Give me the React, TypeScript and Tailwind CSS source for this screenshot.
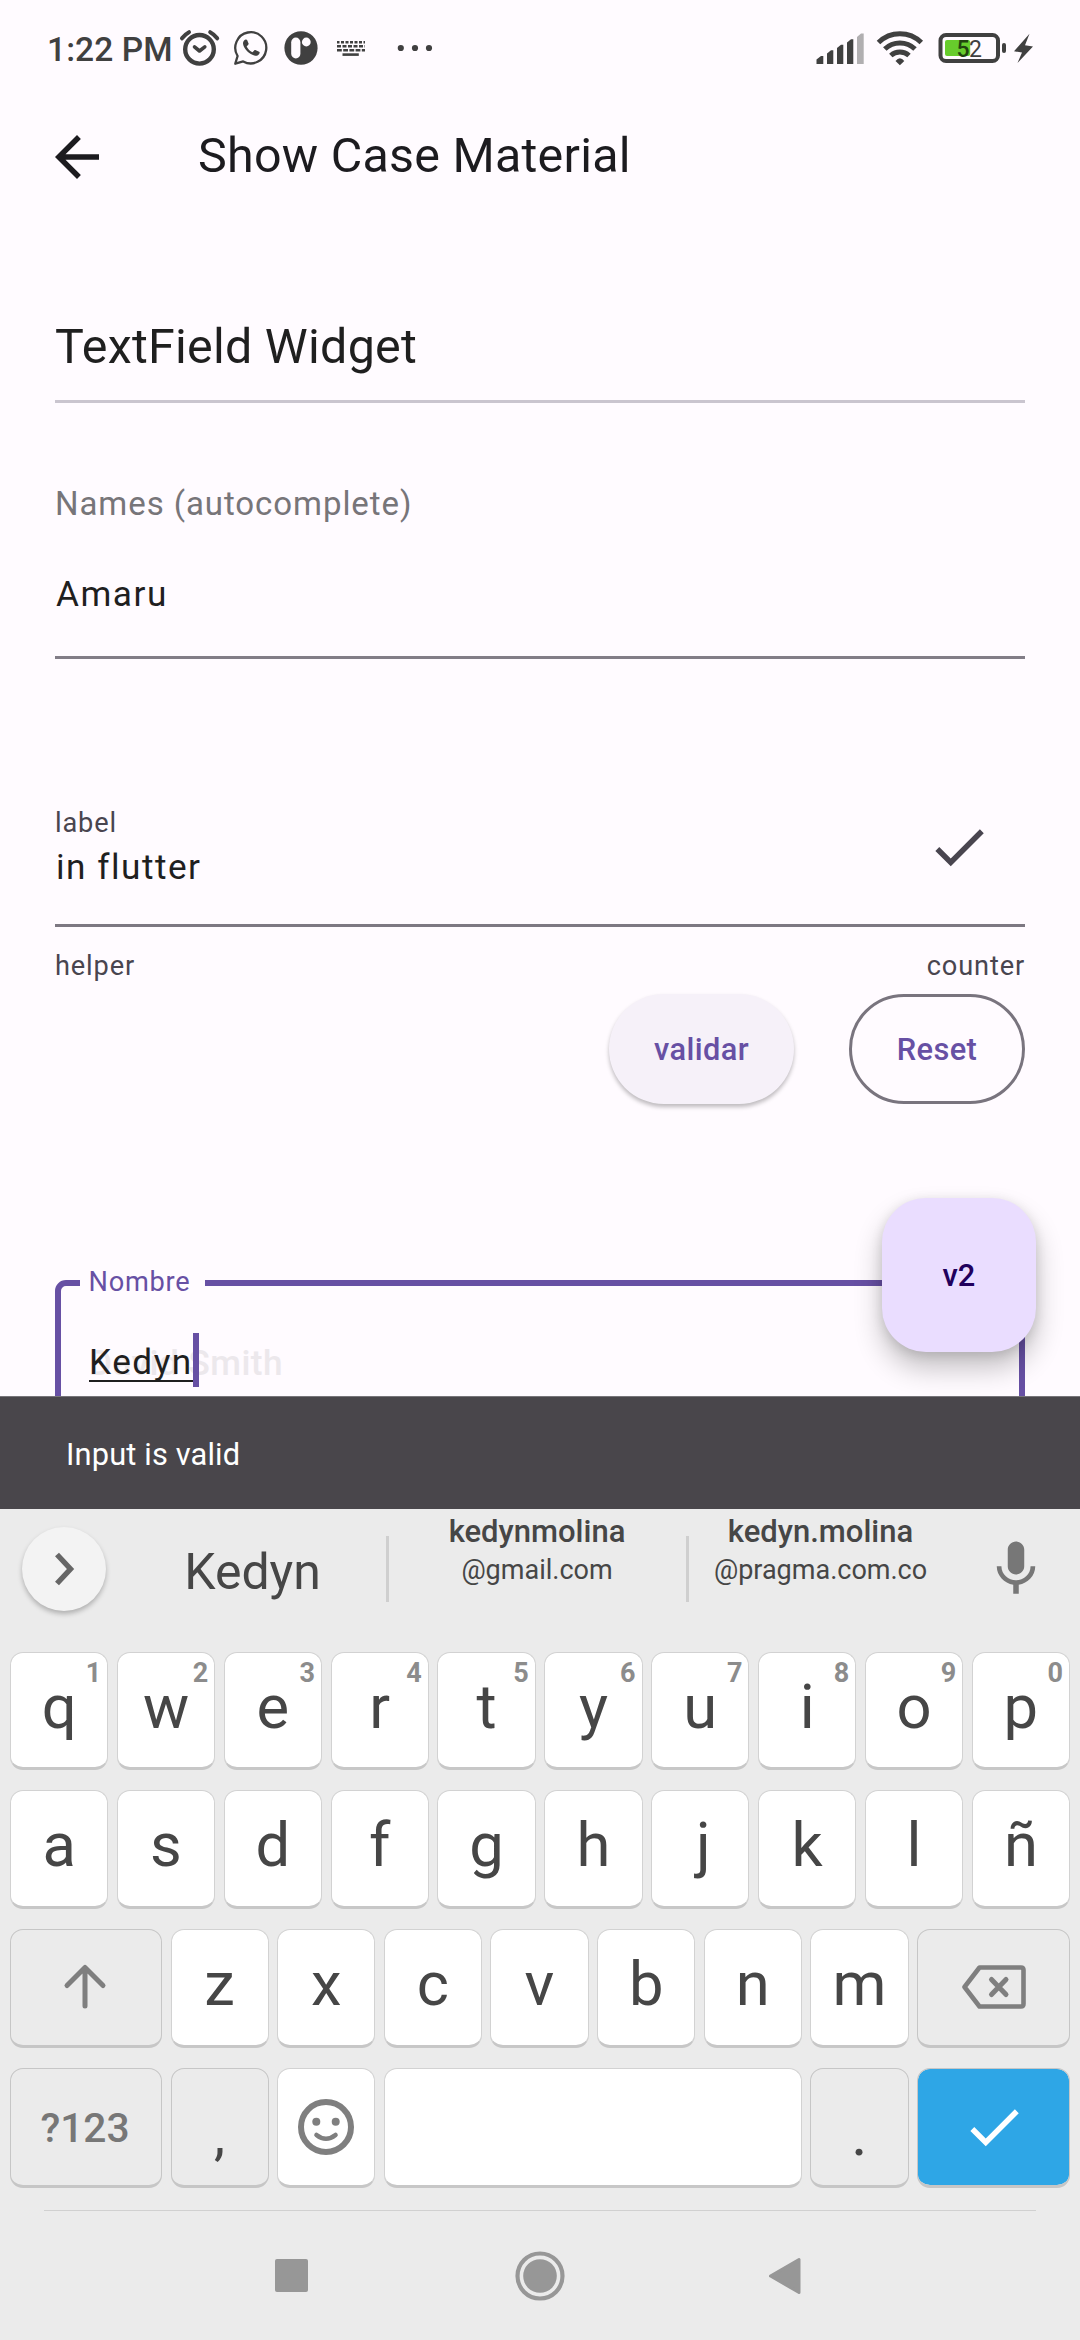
import type { ReactNode } from "react";
import { MdArrowBack, MdCheck, MdMic } from "react-icons/md";

function StatusIcons() {
  return (
    <svg width="260" height="44" viewBox="176 28 260 44" fill="none" className="ml-[5px]">
      {/* alarm */}
      <g stroke="#404040" strokeLinecap="round" strokeLinejoin="round">
        <circle cx="199.5" cy="50.3" r="14.3" strokeWidth="4.4" />
        <path d="M182 39.3 Q185 35.3 189 33.2 M217.2 39.3 Q214.2 35.3 210.2 33.2" strokeWidth="4" />
        <path d="M194.5 47.8 L199.5 52 L204.8 47.8" strokeWidth="3.6" />
      </g>
      {/* messenger */}
      <path
        d="M235.3 64.7 L237.6 57 A15.5 15.6 0 1 1 243.2 62.4 Z"
        stroke="#404040"
        strokeWidth="2.3"
        strokeLinejoin="round"
      />
      <g transform="translate(240.3 37.4) scale(0.92)" fill="#404040">
        <path d="M6.9 10.9c1.4 2.8 3.6 4.9 6.3 6.3l1.9-2c.4-.4.8-.5 1.3-.3l4 1.8c.6.3.8.7.6 1.3-.7 2.2-2.7 3.4-4.9 3C9.6 19.6 4 13.6 3 8.2c-.3-2.2 1-4.4 2.8-4.9.7-.1 1.3 0 1.6.6l1.6 3.7c.2.5.1.8-.2 1.2z" />
      </g>
      {/* round app badge */}
      <ellipse cx="301" cy="49" rx="16.6" ry="16.8" fill="#404040" />
      <rect x="291.2" y="38.6" width="9.2" height="20.8" rx="4.6" fill="#fffbff" />
      <circle cx="306.3" cy="43" r="4.4" fill="#fffbff" />
      {/* keyboard */}
      <g stroke="#404040" strokeWidth="2.6">
        <path d="M337 43.3 H365" strokeDasharray="3 1.5" strokeDashoffset="0.5" />
        <path d="M337 47.3 H365" strokeDasharray="4 1.5" />
        <path d="M337 51.3 H365" strokeDasharray="4.8 1.4" />
        <path d="M342.5 55.6 H358.8" />
      </g>
      {/* overflow dots */}
      <g fill="#404040">
        <circle cx="400.8" cy="49" r="3.1" />
        <circle cx="415" cy="49" r="3.1" />
        <circle cx="429" cy="49" r="3.1" />
      </g>
    </svg>
  );
}

function SystemIcons() {
  return (
    <svg width="222" height="44" viewBox="814 28 222 44" fill="none">
      {/* signal */}
      <g fill="#404040">
        <path d="M816.5 65 V60.5 L821 57 H823.3 V65 Z" />
        <path d="M827 65 V54.5 L831 51.2 H833.3 V65 Z" />
        <path d="M837 65 V49 L841 45.8 H843.3 V65 Z" />
        <path d="M847 65 V43.5 L851 40.2 H853.3 V65 Z" />
      </g>
      <path d="M857 65 V38 L861 34.5 H863.7 V65 Z" fill="#b1afb1" />
      {/* wifi */}
      <g stroke="#404040" strokeWidth="5">
        <path d="M878.5 43.5 A30.5 30.5 0 0 1 921.3 43.5" />
        <path d="M884.8 50 A21.7 21.7 0 0 1 915 50" />
        <path d="M890.8 56.5 A13.5 13.5 0 0 1 909 56.5" />
      </g>
      <path d="M895.5 62 Q899.9 56.5 904.3 62 L899.9 66.3 Z" fill="#404040" />
      {/* battery */}
      <rect x="940.5" y="36" width="57.5" height="26" rx="5.5" stroke="#404040" strokeWidth="4" />
      <rect x="945" y="41" width="25.2" height="16" rx="2" fill="#67cc2c" />
      <rect x="1002" y="44" width="4" height="10" rx="2" fill="#404040" />
      <text x="956.6" y="58" fontFamily="Roboto" fontSize="23" fontWeight="500" fill="#22420f">
        5
      </text>
      <text x="969" y="58" fontFamily="Roboto" fontSize="23" fill="#404040">
        2
      </text>
      <path d="M1029.5 34.8 L1014 52.3 L1022 53.5 L1017.5 64 L1033 47.5 L1025 46.3 Z" fill="#404040" />
    </svg>
  );
}

type KeyProps = {
  children?: ReactNode;
  hint?: string;
  tone?: "light" | "flat" | "accent";
  className?: string;
};

const tones = {
  light: "border-[#d2d2d2] border-b-[#c7c7c7] bg-white",
  flat: "border-[#c6c6c6] bg-[#ebebeb]",
  accent: "border-[#c6c6c6] bg-[#2ea6e6] bg-clip-padding",
};

function Key({ children, hint, tone = "light", className = "" }: KeyProps) {
  return (
    <div
      className={`relative flex h-full justify-center rounded-[13px] border border-b-[3px] text-[61.5px] leading-[109px] text-[#464646] ${tones[tone]} ${className}`}
    >
      {hint && (
        <span className="absolute top-0 right-[6px] text-[27px] leading-[40px] font-bold text-[#8c8c8c]">{hint}</span>
      )}
      {children}
    </div>
  );
}

function Keyboard() {
  return (
    <section className="flex h-[831px] flex-col bg-[#ebebeb] text-[#464646]">
      <div className="flex h-[143px] shrink-0 items-start">
        <div className="flex w-[386px] items-start pl-[22px]">
          <div className="mt-[18px] flex size-[84px] items-center justify-center rounded-full bg-[#f3f3f3] shadow-[0_3px_5px_rgba(0,0,0,0.25)]">
            <svg width="24" height="36" viewBox="0 0 24 36" fill="none" className="ml-[2px]">
              <path d="M4 3.5 L17.5 18 L4 32.5" stroke="#666" strokeWidth="5.4" />
            </svg>
          </div>
          <div className="mt-[33px] ml-[13px] flex-1 text-center text-[50px] leading-[60px]">Kedyn</div>
        </div>
        <div className="mt-[27px] h-[66px] w-[3px] bg-[#cfcfcf]" />
        <div className="mt-[5px] w-[297px] pr-px text-center">
          <div className="text-[31px] leading-[36px] font-medium">kedynmolina</div>
          <div className="mt-[2px] text-[27px] leading-[36px]">@gmail.com</div>
        </div>
        <div className="mt-[27px] h-[66px] w-[3px] bg-[#cfcfcf]" />
        <div className="mt-[5px] w-[263px] text-center">
          <div className="text-[31px] leading-[36px] font-medium">kedyn.molina</div>
          <div className="mt-[2px] text-[27px] leading-[36px]">@pragma.com.co</div>
        </div>
        <MdMic className="mt-[27px] ml-[31px] size-[66px] text-[#777]" />
      </div>

      <div className="flex flex-col gap-5 px-[10px]">
        <div className="grid h-[118px] grid-cols-10 gap-[8.6px]">
          {"qwertyuiop".split("").map((c, i) => (
            <Key key={c} hint={String((i + 1) % 10)}>
              {c}
            </Key>
          ))}
        </div>
        <div className="grid h-[119px] grid-cols-10 gap-[8.6px]">
          {"asdfghjklñ".split("").map((c) => (
            <Key key={c} className={c === "j" ? "pl-[6px]" : ""}>
              {c}
            </Key>
          ))}
        </div>
        <div className="flex h-[119px] gap-[8.5px]">
          <Key tone="flat" className="w-[152px] items-center">
            <svg width="46" height="48" viewBox="0 0 46 48" fill="none" className="-mt-[2px] mr-[2px]">
              <path
                d="M23 43 V5 M5 22.5 L23 4.5 L41 22.5"
                stroke="#7f7f7f"
                strokeWidth="5"
                strokeLinecap="round"
                strokeLinejoin="round"
              />
            </svg>
          </Key>
          <div className="grid flex-1 grid-cols-7 gap-[8.6px]">
            {"zxcvbnm".split("").map((c) => (
              <Key key={c}>{c}</Key>
            ))}
          </div>
          <Key tone="flat" className="w-[153px] items-center">
            <svg width="66" height="48" viewBox="0 0 66 48" fill="none" className="-mt-[2px]">
              <g stroke="#7f7f7f" strokeWidth="4.6" strokeLinecap="round" strokeLinejoin="round">
                <path d="M18.5 4.5 H60 Q62.5 4.5 62.5 7 V41 Q62.5 43.5 60 43.5 H18.5 L3.5 24 Z" />
                <path d="M30.5 16.5 L45 31.5 M45 16.5 L30.5 31.5" strokeWidth="5" />
              </g>
            </svg>
          </Key>
        </div>
        <div className="flex h-[120px] gap-[8.5px]">
          <Key tone="flat" className="w-[152px]">
            <span className="mr-[2px] text-[40.7px] leading-[118px] font-medium text-[#777]">?123</span>
          </Key>
          <Key tone="flat" className="w-[98px]">
            <span className="text-[56px] leading-[132px]">,</span>
          </Key>
          <Key className="w-[98px] items-center">
            <svg width="58" height="58" viewBox="0 0 58 58" fill="none">
              <circle cx="29" cy="29" r="25" stroke="#7f7f7f" strokeWidth="6" />
              <circle cx="19.3" cy="23.7" r="4" fill="#7f7f7f" />
              <circle cx="38.7" cy="23.7" r="4" fill="#7f7f7f" />
              <path d="M19.5 37 Q29 44.5 38.5 37" stroke="#7f7f7f" strokeWidth="4.6" strokeLinecap="round" />
            </svg>
          </Key>
          <Key className="flex-1" />
          <Key tone="flat" className="w-[98.5px]">
            <span className="leading-[130px]">.</span>
          </Key>
          <Key tone="accent" className="w-[153px] items-center">
            <MdCheck className="size-[66px] text-white" />
          </Key>
        </div>
      </div>

      <div className="mx-11 mt-[22px] h-px bg-[#d0d0d0]" />
      <nav className="flex h-[129px] items-center pl-[275px]">
        <div className="size-[33px] rounded-[2px] bg-[#979797]" />
        <svg width="50" height="50" viewBox="0 0 50 50" className="ml-[207px]">
          <circle cx="25" cy="25" r="22.5" fill="none" stroke="#979797" strokeWidth="4.2" />
          <circle cx="25" cy="25" r="16.8" fill="#979797" />
        </svg>
        <svg width="34" height="40" viewBox="0 0 34 40" className="ml-[203px]">
          <path
            d="M2.5 20 L31 3.5 V36.5 Z"
            fill="#979797"
            stroke="#979797"
            strokeWidth="3"
            strokeLinejoin="round"
          />
        </svg>
      </nav>
    </section>
  );
}

export default function App() {
  return (
    <div className="flex h-[2340px] w-[1080px] flex-col overflow-hidden bg-[#fffbff] font-['Roboto',sans-serif] text-[#1f1f1f]">
      <main className="relative h-[1396px] shrink-0 overflow-hidden">
        <div className="flex h-[98px] items-center justify-between pr-[44px] pl-[47px]">
          <div className="flex items-center">
            <span className="mt-[3px] w-[124px] text-[33.5px] font-medium tracking-[0.1px] whitespace-nowrap text-[#404040]">
              1:22 PM
            </span>
            <StatusIcons />
          </div>
          <SystemIcons />
        </div>

        <header className="flex h-[118px] items-center pl-11 text-[#1c1b1f]">
          <MdArrowBack className="size-[66px]" />
          <h1 className="mb-[3px] ml-[88px] text-[48.4px] leading-[60px] tracking-[0.26px]">Show Case Material</h1>
        </header>

        <div className="px-[55px]">
          <h2 className="mt-[100px] h-[87px] border-b-[3px] border-[#cac5cf] pt-px text-[48.4px] leading-[60px] tracking-[0.26px]">
            TextField Widget
          </h2>

          <div className="mt-[81px] text-[33px] leading-[40px] tracking-[0.93px] text-[#777579]">Names (autocomplete)</div>
          <div className="mt-12 h-[87px] border-b-[3px] border-[#827d87] pl-px text-[35.2px] leading-[44px] tracking-[1.5px]">
            Amaru
          </div>

          <div className="mt-[148px] flex h-[120px] items-start justify-between border-b-[3px] border-[#7d7882]">
            <div>
              <div className="text-[27.2px] leading-[32px] tracking-[0.85px] text-[#49454f]">label</div>
              <div className="mt-[6px] pl-px text-[35.2px] leading-[44px] tracking-[1.5px]">in flutter</div>
            </div>
            <MdCheck className="mt-[7px] mr-[33px] size-[66px] text-[#49454f]" />
          </div>
          <div className="mt-[23px] flex justify-between text-[27.2px] leading-[32px] tracking-[0.85px] text-[#49454f]">
            <span>helper</span>
            <span>counter</span>
          </div>

          <div className="mt-3 flex justify-end gap-[55px] text-[30.8px] font-medium tracking-[0.4px] text-[#6750a4]">
            <button className="h-[110px] w-[185px] rounded-full bg-[#f6f1f9] pt-[2px] shadow-[0_3px_4px_rgba(0,0,0,0.26)]">
              validar
            </button>
            <button className="h-[110px] w-[176px] rounded-full border-[3px] border-[#79747e] pt-[2px]">Reset</button>
          </div>

          <div className="relative mt-[176px] h-[180px] rounded-[11px] border-[6px] border-[#6750a4] pl-[28px]">
            <span className="absolute -top-[22px] left-[19px] h-8 w-[125px] bg-[#fffbff] pl-[8.5px] text-[27.2px] leading-[36px] tracking-[0.75px] text-[#6750a4]">
              Nombre
            </span>
            <div className="relative mt-[47px] flex h-[54px] items-center">
              <span className="absolute top-[8px] left-0 text-[35.2px] leading-[44px] font-medium tracking-[0.47px] whitespace-nowrap text-[#ece8ec]">
                David Smith
              </span>
              <span className="relative mt-[3px] h-[41px] w-[104px] border-b-2 border-[#1f1f1f] text-[35.2px] leading-[42px] tracking-[1.5px]">
                Kedyn
              </span>
              <span className="relative h-[54px] w-[6px] bg-[#6750a4]" />
            </div>
          </div>
        </div>

        <button className="absolute top-[1198px] right-11 h-[154px] w-[154px] rounded-[44px] bg-[#eaddff] pt-[2px] text-[30.8px] font-medium text-[#21005d] shadow-[0_16px_28px_rgba(0,0,0,0.24),0_3px_12px_rgba(0,0,0,0.12)]">
          v2
        </button>
      </main>

      <div className="flex h-[113px] shrink-0 items-center border-t border-[#77757a] bg-[#49464b] pt-[4px] pl-[66px] text-[30.8px] tracking-[0.15px] text-white">
        Input is valid
      </div>

      <Keyboard />
    </div>
  );
}
